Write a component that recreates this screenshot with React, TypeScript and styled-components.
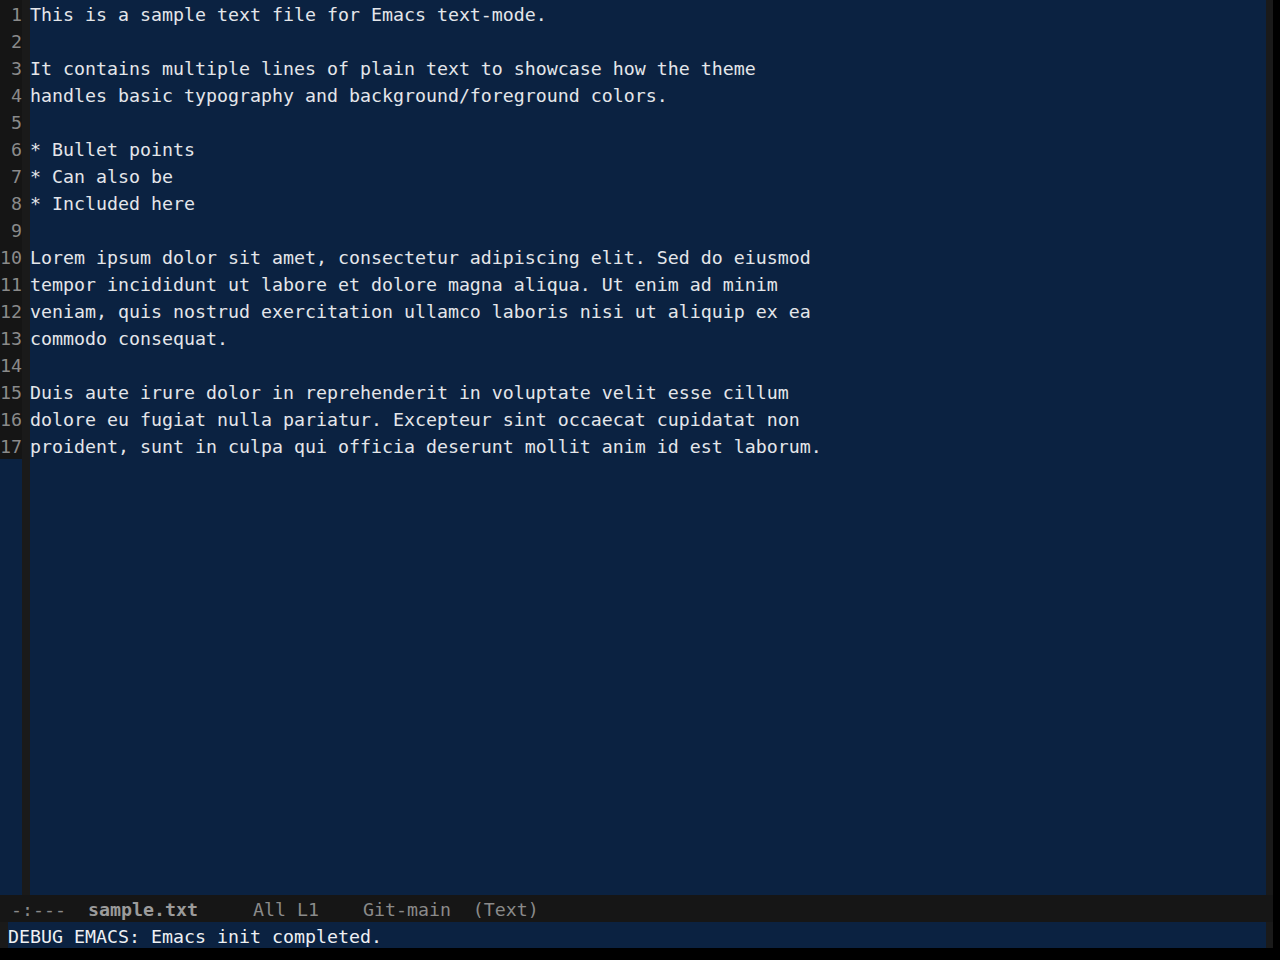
import React from "react";
import styled, { createGlobalStyle } from "styled-components";

const Global = createGlobalStyle`
  html, body { margin: 0; padding: 0; background: #000; }
  body { width: 1280px; height: 960px; overflow: hidden; }
`;

const lines = [
  "This is a sample text file for Emacs text-mode.",
  "",
  "It contains multiple lines of plain text to showcase how the theme",
  "handles basic typography and background/foreground colors.",
  "",
  "* Bullet points",
  "* Can also be",
  "* Included here",
  "",
  "Lorem ipsum dolor sit amet, consectetur adipiscing elit. Sed do eiusmod",
  "tempor incididunt ut labore et dolore magna aliqua. Ut enim ad minim",
  "veniam, quis nostrud exercitation ullamco laboris nisi ut aliquip ex ea",
  "commodo consequat.",
  "",
  "Duis aute irure dolor in reprehenderit in voluptate velit esse cillum",
  "dolore eu fugiat nulla pariatur. Excepteur sint occaecat cupidatat non",
  "proident, sunt in culpa qui officia deserunt mollit anim id est laborum.",
];

const BLUE = "#0b2241";

const Frame = styled.div`
  width: 1280px;
  height: 960px;
  background: #000;
  display: grid;
  grid-template-columns: 1273px 7px;
  grid-template-rows: 895px 27px 26px 12px;
  font-family: "DejaVu Sans Mono", "Liberation Mono", monospace;
  font-size: 18.27px;
  line-height: 27px;
`;

const Window = styled.div`
  display: flex;
  background: ${BLUE};
  grid-column: 1;
`;

const NumberColumn = styled.div`
  width: 22px;
  display: flex;
  flex-direction: column;
`;

const LineNumber = styled.div`
  height: 27px;
  box-sizing: border-box;
  padding-top: 2px;
  line-height: 25px;
  background: #151515;
  color: #8a8a8a;
  text-align: right;
  white-space: pre;
`;

const Fringe = styled.div<{ $w: number }>`
  width: ${(p) => p.$w}px;
  flex: none;
  background: #1a1a1a;
`;

const TextArea = styled.div`
  flex: 1;
  color: #e4e6ea;
  display: flex;
  flex-direction: column;
`;

const Line = styled.div`
  height: 27px;
  box-sizing: border-box;
  padding-top: 2px;
  line-height: 25px;
  white-space: pre;
`;

const ModeLine = styled.div`
  grid-column: 1;
  background: #161616;
  color: #8a8a8a;
  white-space: pre;
  box-sizing: border-box;
  padding-top: 2px;
  line-height: 25px;
`;

const BufName = styled.span`
  font-weight: bold;
  color: #9b9b9b;
`;

const MiniBuffer = styled.div`
  grid-column: 1;
  display: flex;
`;

const MiniText = styled.div`
  flex: 1;
  background: ${BLUE};
  color: #eef0f3;
  white-space: pre;
  box-sizing: border-box;
  padding-top: 3px;
  line-height: 23px;
`;

export default function App() {
  return (
    <>
      <Global />
      <Frame>
        <Window>
          <NumberColumn>
            {lines.map((_, i) => (
              <LineNumber key={i}>{String(i + 1).padStart(2, " ")}</LineNumber>
            ))}
          </NumberColumn>
          <Fringe $w={8} />
          <TextArea>
            {lines.map((l, i) => (
              <Line key={i}>{l}</Line>
            ))}
          </TextArea>
          <Fringe $w={7} />
        </Window>
        <div />
        <ModeLine>
          {" -:---  "}
          <BufName>sample.txt</BufName>
          {"     All L1    Git-main  (Text)"}
        </ModeLine>
        <div />
        <MiniBuffer>
          <Fringe $w={8} />
          <MiniText>DEBUG EMACS: Emacs init completed.</MiniText>
          <Fringe $w={7} />
        </MiniBuffer>
      </Frame>
    </>
  );
}
